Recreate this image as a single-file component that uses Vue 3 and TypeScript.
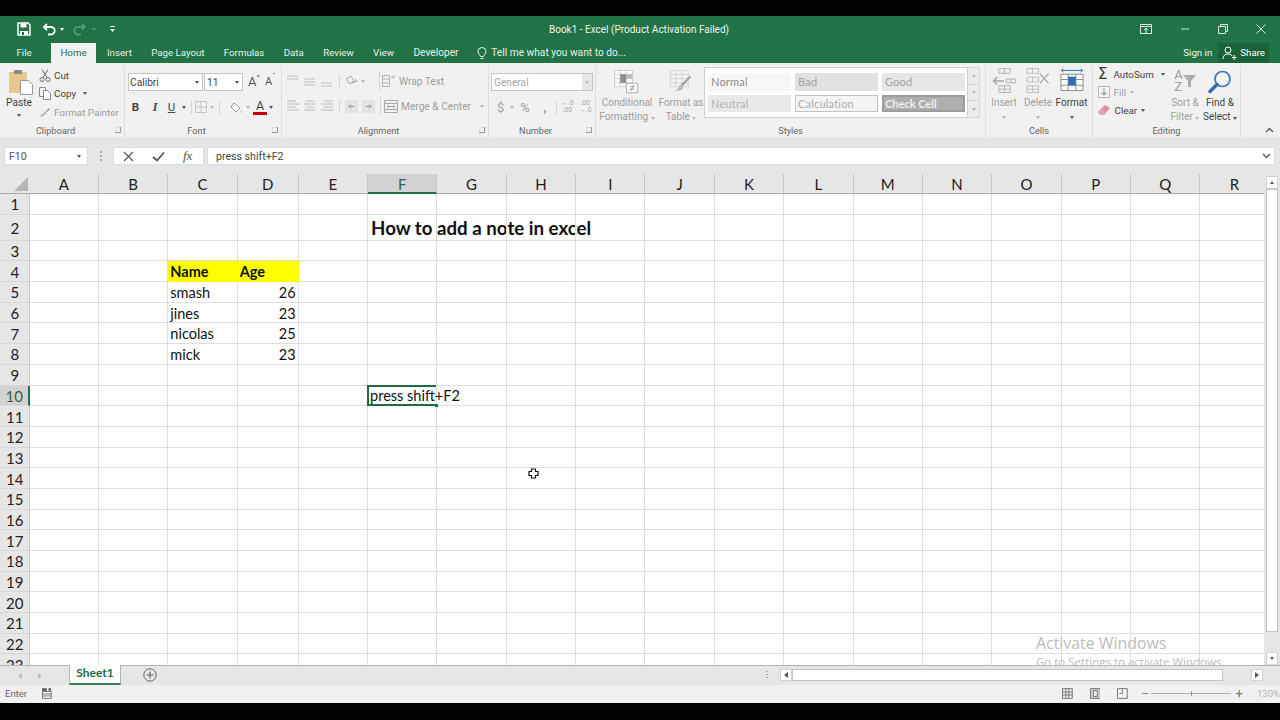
<script setup lang="ts">
interface CellData { text: string; bold?: boolean; right?: boolean; fill?: boolean; big?: boolean }
const colNames = 'ABCDEFGHIJKLMNOPQR'.split('')
const data: Record<string, CellData> = {
  F2: { text: 'How to add a note in excel', bold: true, big: true },
  C4: { text: 'Name', bold: true, fill: true },
  D4: { text: 'Age', bold: true, fill: true },
  C5: { text: 'smash' }, D5: { text: '26', right: true },
  C6: { text: 'jines' }, D6: { text: '23', right: true },
  C7: { text: 'nicolas' }, D7: { text: '25', right: true },
  C8: { text: 'mick' }, D8: { text: '23', right: true },
  F10: { text: 'press shift+F2' }
}
const rows = Array.from({ length: 23 }, (_, i) => i + 1)
const tabs = ['Insert', 'Page Layout', 'Formulas', 'Data', 'Review', 'View', 'Developer']
const alignTop = ['M1 2h11M1 5h11', 'M1 5h11M1 8h11M1 11h11', 'M1 9h11M1 12h11']
const alignSide = ['M1 2h9M1 5h12M1 8h9M1 11h12', 'M3 2h8M1 5h12M3 8h8M1 11h12', 'M4 2h9M1 5h12M4 8h9M1 11h12']
</script>

<template>
  <div class="screen">
    <header class="title-bar">
      <div class="qat">
        <svg class="save" width="14" height="14" viewBox="0 0 14 14"><path d="M1 1h10l2 2v10H1z" fill="none" stroke="#fff" stroke-width="1.5"/><path d="M3.5 1.5h6v4h-6z" fill="#fff"/><path d="M3 9h8v4H3z" fill="#fff"/><path d="M5 10h2v3H5z" fill="#217346"/></svg>
        <svg class="undo" width="14" height="13" viewBox="0 0 14 13"><path d="M2 4h7a3.6 3.6 0 0 1 0 7.500H6M5 1 2 4l3 3" fill="none" stroke="#fff" stroke-width="1.800"/></svg>
        <i class="tri white"></i>
        <svg class="redo" width="14" height="13" viewBox="0 0 14 13"><path d="M12 4H5a3.600 3.600 0 0 0 0 7.500h3M9 1l3 3-3 3" fill="none" stroke="#4f9a73" stroke-width="1.800"/></svg>
        <i class="tri faint"></i>
        <svg class="custom" width="7" height="8" viewBox="0 0 7 8"><path d="M1 1.500h5" stroke="#fff"/><path d="M1 4h5L3.500 7z" fill="#fff"/></svg>
      </div>
      <div class="doc-title">Book1 - Excel (Product Activation Failed)</div>
      <div class="win">
        <svg width="12" height="10" viewBox="0 0 12 10"><path d="M.5.500h11v9H.5zM.5 2.500h11" fill="none" stroke="#dcebe3"/><path d="M6 9V4M4 6l2-2 2 2" fill="none" stroke="#dcebe3"/></svg>
        <svg width="10" height="10" viewBox="0 0 10 10"><path d="M1 5h8" stroke="#dcebe3"/></svg>
        <svg width="10" height="10" viewBox="0 0 10 10"><path d="M.5 2.500h7v7h-7zM2.500 2.500v-2h7v7h-2" fill="none" stroke="#dcebe3"/></svg>
        <svg width="10" height="10" viewBox="0 0 10 10"><path d="M.5.500l9 9M9.500.500l-9 9" stroke="#dcebe3"/></svg>
      </div>
    </header>

    <nav class="tab-bar">
      <span class="tab file">File</span>
      <span class="tab home">Home</span>
      <span v-for="t in tabs" :key="t" class="tab">{{ t }}</span>
      <span class="tell">
        <svg width="10" height="13" viewBox="0 0 10 13"><path d="M3.500 9.500C3 7.500 1 6.800 1 4.500a4 4 0 0 1 8 0C9 6.800 7 7.500 6.500 9.500zM3.500 11.500h3" fill="none" stroke="#fff" stroke-width=".9"/></svg>
        Tell me what you want to do...
      </span>
      <span class="sign">Sign in</span>
      <span class="share">
        <svg width="15" height="14" viewBox="0 0 15 14"><circle cx="6" cy="4" r="3" fill="none" stroke="#fff"/><path d="M1 13c0-3.500 2-5 5-5s3.500.800 4 2M10 11.500h4.500M12.200 9v5" fill="none" stroke="#fff"/></svg>
        Share
      </span>
    </nav>

    <section class="ribbon">
      <div class="group g-clip">
        <div class="body clip-body">
          <div class="paste">
            <svg width="24" height="26" viewBox="0 0 24 26"><path d="M0 3h18v21H0z" fill="#e8c88f"/><path d="M5 1h8v4H5z" fill="#8d8d8d"/><path d="M11.500 11.500h8l4 4v10h-12z" fill="#fff" stroke="#9a9a9a"/></svg>
            <span>Paste</span>
            <i class="tri dark"></i>
          </div>
          <div class="clip-list">
            <div class="clip-item">
              <svg width="12" height="13" viewBox="0 0 12 13"><circle cx="3" cy="10.500" r="2" fill="none" stroke="#55708c"/><circle cx="9" cy="10.500" r="2" fill="none" stroke="#55708c"/><path d="M3.800 8.800 9 .500M8.200 8.800 3 .500" stroke="#666"/></svg>
              <span>Cut</span>
            </div>
            <div class="clip-item">
              <svg width="12" height="13" viewBox="0 0 12 13"><path d="M.5.500h6v9h-6z" fill="#f4f4f4" stroke="#888"/><path d="M4.500 3.500h4l3 3v6h-7z" fill="#fff" stroke="#888"/></svg>
              <span>Copy</span><i class="tri dark copy-tri"></i>
            </div>
            <div class="clip-item off">
              <svg width="12" height="11" viewBox="0 0 12 11"><path d="M1 9l5-5 2 2-5 4z" fill="#bcbcbc"/><path d="M7 4l3-3 1 1-3 3z" fill="#9c9c9c"/></svg>
              <span>Format Painter</span>
            </div>
          </div>
        </div>
        <div class="label launchable">Clipboard<i class="launch"></i></div>
      </div>

      <div class="group g-font">
        <div class="body font-body">
          <div class="row font-row1">
            <div class="combo name">Calibri<i class="tri dark"></i></div>
            <div class="combo size">11<i class="tri dark"></i></div>
            <span class="grow">A<sup>^</sup></span>
            <span class="grow small">A<sup>ˇ</sup></span>
          </div>
          <div class="row font-row2">
            <b class="fmt">B</b>
            <em class="fmt serifish">I</em>
            <u class="fmt">U</u>
            <i class="tri dark"></i>
            <span class="v-sep"></span>
            <svg class="borders" width="12" height="12" viewBox="0 0 12 12"><path d="M.5.500h11v11H.5zM6 .5v11M.5 6h11" fill="none" stroke="#c6c6c6"/></svg>
            <i class="tri pale"></i>
            <span class="v-sep"></span>
            <svg class="bucket" width="14" height="13" viewBox="0 0 14 13"><path d="M5 2l6 5-4 4-5-5z" fill="#fff" stroke="#9a9a9a"/><path d="M12 9c1 1.500 1 3 0 3s-1-1.500 0-3z" fill="#c8c8c8"/></svg>
            <i class="tri pale"></i>
            <span class="font-color">A</span>
            <i class="tri dark"></i>
          </div>
        </div>
        <div class="label launchable">Font<i class="launch"></i></div>
      </div>

      <div class="group g-align">
        <div class="body align-body">
          <div class="row align-row1">
            <svg v-for="d in alignTop" :key="d" width="14" height="14" viewBox="0 0 14 14"><path :d="d" stroke="#bdbdbd" fill="none"/></svg>
            <span class="v-sep"></span>
            <svg width="13" height="13" viewBox="0 0 13 13"><path d="M1 4l5-3 3 5-4 3zM7 8l5-2M10 4l2 2-2 1" fill="none" stroke="#a9a9a9"/></svg>
            <i class="tri pale"></i>
            <span class="v-sep second"></span>
            <svg width="14" height="14" viewBox="0 0 14 14"><path d="M.5 1.500h7v11h-7zM.5 5h7M.5 9h7M9 3h3.500M11 1.500l1.500 1.500L11 4.500" fill="none" stroke="#b2b2b2"/></svg>
            <span class="dim-text">Wrap Text</span>
          </div>
          <div class="row align-row2">
            <svg v-for="d in alignSide" :key="d" width="14" height="14" viewBox="0 0 14 14"><path :d="d" stroke="#bdbdbd" fill="none"/></svg>
            <span class="v-sep"></span>
            <svg width="13" height="13" viewBox="0 0 13 13"><path d="M0 0h13v13H0z" fill="#e3e3e3"/><path d="M9 6.500H4M6 4.500l-2 2 2 2" fill="none" stroke="#9a9a9a"/></svg>
            <svg class="indent2" width="13" height="13" viewBox="0 0 13 13"><path d="M0 0h13v13H0z" fill="#e3e3e3"/><path d="M4 6.500h5M7 4.500l2 2-2 2" fill="none" stroke="#9a9a9a"/></svg>
            <span class="v-sep third"></span>
            <svg class="merge" width="14" height="13" viewBox="0 0 14 13"><path d="M.5.500h13v12H.5zM.5 3.500h13M.5 9.500h13M3 6.500h8M5 5 3 6.500 5 8M9 5l2 1.500L9 8" fill="none" stroke="#a8a8a8"/></svg>
            <span class="dim-text">Merge &amp; Center</span>
            <i class="tri pale merge-tri"></i>
          </div>
        </div>
        <div class="label launchable">Alignment<i class="launch"></i></div>
      </div>

      <div class="group g-number">
        <div class="body number-body">
          <div class="row">
            <div class="combo general">General<span class="combo-btn"><i class="tri pale"></i></span></div>
          </div>
          <div class="row number-row2">
            <span class="sym dollar">$</span>
            <i class="tri pale"></i>
            <span class="sym percent">%</span>
            <span class="sym comma">,</span>
            <span class="v-sep"></span>
            <span class="dec"><span>←.0</span><span>.00</span></span>
            <span class="dec"><span>.00</span><span>→.0</span></span>
          </div>
        </div>
        <div class="label launchable">Number<i class="launch"></i></div>
      </div>

      <div class="group g-styles">
        <div class="body styles-body">
          <div class="big-btn cond">
            <svg width="26" height="24" viewBox="0 0 30 28"><path d="M.5.500h21v19H.5zM.5 5h21M.5 10h21M.5 15h21M7 .5v19M14 .5v19" fill="#fff" stroke="#c6c6c6"/><path d="M7 5h7v10H7z" fill="#8e8e8e"/><path d="M14 5h7v5h-7z" fill="#bdbdbd"/><path d="M14.500 15.500h13v11h-13z" fill="#fff" stroke="#a0a0a0"/><path d="M18 19.500h6M18 22.500h6M23 17.500l-4 7" stroke="#909090" fill="none"/></svg>
            <span>Conditional</span>
            <span>Formatting <i class="tri pale"></i></span>
          </div>
          <div class="big-btn astable">
            <svg width="26" height="24" viewBox="0 0 26 28"><path d="M.5.500h21v19H.5zM.5 5h21M.5 10h21M.5 15h21M7 .5v19M14 .5v19" fill="#f3f3f3" stroke="#cfcfcf"/><path d="M25 8 15 19l-2-2L23 7z" fill="#9d9d9d"/><path d="M13 17c-3 1-2 5-7 7 6 1 10-1 9-5z" fill="#b9b9b9"/></svg>
            <span>Format as</span>
            <span>Table <i class="tri pale"></i></span>
          </div>
          <div class="gallery">
            <div class="swatches">
              <span class="sw normal">Normal</span>
              <span class="sw bad">Bad</span>
              <span class="sw good">Good</span>
              <span class="sw neutral">Neutral</span>
              <span class="sw calc">Calculation</span>
              <span class="sw check">Check Cell</span>
            </div>
            <div class="gal-scroll">
              <span><i class="tri up"></i></span>
              <span><i class="tri pale"></i></span>
              <span><i class="tri pale"></i></span>
            </div>
          </div>
        </div>
        <div class="label">Styles</div>
      </div>

      <div class="group g-cells">
        <div class="body cells-body">
          <div class="big-btn cell-btn off">
            <svg width="25" height="25" viewBox="0 0 25 26"><path d="M6.500.500h12v5h-12zM6.500 18.500h12v7h-12zM12.500 18.500v7M6.500 22h12M12.500.500v5M14 11.500h10v4H14zM19 11.500v4" fill="none" stroke="#b5b5b5"/><path d="M12 13.500H1M5 9.500l-4 4 4 4" fill="none" stroke="#a5a5a5" stroke-width="1.500"/></svg>
            <span>Insert</span><i class="tri pale"></i>
          </div>
          <div class="big-btn cell-btn off">
            <svg width="26" height="25" viewBox="0 0 26 26"><path d="M1.500.500h12v5h-12zM1.500 18.500h12v7h-12zM7.500 18.500v7M1.500 22h12M7.500.500v5M1.500 9.500h12v5h-12zM7.500 9.500v5" fill="none" stroke="#c0c0c0"/><path d="M15 6l9 10M24 6l-9 10" stroke="#adadad" stroke-width="1.500"/></svg>
            <span>Delete</span><i class="tri pale"></i>
          </div>
          <div class="big-btn cell-btn format-btn">
            <svg width="24" height="25" viewBox="0 0 24 26"><path d="M.5 6.500h23v17H.5zM8 6.500v17M16 6.500v17M.5 12h23M.5 18h23" fill="#fff" stroke="#8a8a8a"/><path d="M8 9h8v9H8z" fill="#2f70b5"/><path d="M1 2.500h22M3 .5 1 2.500l2 2M21 .5l2 2-2 2" fill="none" stroke="#2f70b5"/></svg>
            <span class="strong">Format</span><i class="tri dark"></i>
          </div>
        </div>
        <div class="label">Cells</div>
      </div>

      <div class="group g-edit">
        <div class="body edit-body">
          <div class="edit-list">
            <div class="edit-item"><span class="sigma">Σ</span><span class="strong">AutoSum</span><i class="tri dark auto-tri"></i></div>
            <div class="edit-item off">
              <svg width="12" height="12" viewBox="0 0 12 12"><path d="M.5.500h11v11H.5z" fill="#f4f4f4" stroke="#b8b8b8"/><path d="M6 2v7M3.500 6.500 6 9l2.500-2.500" fill="none" stroke="#a0a0a0" stroke-width="1.200"/></svg>
              <span>Fill</span><i class="tri pale"></i>
            </div>
            <div class="edit-item">
              <svg width="13" height="12" viewBox="0 0 13 12"><path d="M0 8l7-7 5 3-6 7H3z" fill="#e58b9f"/><path d="M0 8l3-3 5 3-2 3H3z" fill="#d9a5b0"/></svg>
              <span class="strong">Clear</span><i class="tri dark"></i>
            </div>
          </div>
          <div class="big-btn sort off">
            <div class="sort-ico"><span class="az">A<br>Z</span>
              <svg width="13" height="12" viewBox="0 0 13 12"><path d="M0 0h13L8 6v6H5V6z" fill="#adadad"/></svg>
            </div>
            <span>Sort &amp;</span>
            <span>Filter <i class="tri pale"></i></span>
          </div>
          <div class="big-btn find">
            <svg width="24" height="24" viewBox="0 0 24 24"><circle cx="14.500" cy="9" r="7.500" fill="none" stroke="#3a78ba" stroke-width="1.700"/><path d="M9 14.500 2 21.500" stroke="#2f6ca8" stroke-width="3.400" stroke-linecap="round"/></svg>
            <span class="strong">Find &amp;</span>
            <span class="strong">Select <i class="tri dark"></i></span>
          </div>
        </div>
        <div class="label">Editing</div>
      </div>

      <div class="collapse">
        <svg width="9" height="6" viewBox="0 0 9 6"><path d="M1 5l3.500-3.500L8 5" fill="none" stroke="#555" stroke-width="1.300"/></svg>
      </div>
    </section>

    <section class="formula-bar">
      <div class="name-box">F10<i class="tri dark"></i></div>
      <div class="grip"></div>
      <div class="fx-box">
        <svg width="11" height="11" viewBox="0 0 11 11"><path d="M1 1l9 9M10 1l-9 9" stroke="#555" stroke-width="1.200"/></svg>
        <svg width="13" height="11" viewBox="0 0 13 11"><path d="M1 6l4 3.500L12 1.500" fill="none" stroke="#555" stroke-width="1.800"/></svg>
        <span class="fx">fx</span>
      </div>
      <div class="input">press shift+F2
        <svg width="9" height="6" viewBox="0 0 9 6"><path d="M1 1l3.500 3.500L8 1" fill="none" stroke="#555" stroke-width="1.300"/></svg>
      </div>
    </section>

    <section class="workspace">
      <div class="sheet">
        <div class="corner"><i></i></div>
        <div v-for="c in colNames" :key="c" class="col-head" :class="{ active: c === 'F' }">{{ c }}</div>
        <template v-for="r in rows" :key="r">
          <div class="row-head" :class="{ active: r === 10 }">{{ r }}</div>
          <div
            v-for="c in colNames"
            :key="c + r"
            class="cell"
            :class="{
              bold: data[c + r]?.bold,
              big: data[c + r]?.big,
              right: data[c + r]?.right,
              fill: data[c + r]?.fill,
              selected: c + r === 'F10'
            }"
          >{{ data[c + r]?.text }}</div>
        </template>
      </div>
      <div class="v-scroll">
        <span class="sb-btn"><i class="tri up dark"></i></span>
        <span class="sb-thumb"></span>
        <span class="sb-btn"><i class="tri dark"></i></span>
      </div>
      <svg class="cursor" width="11" height="11" viewBox="0 0 11 11"><path d="M3.500 1h4v2.500H10v4H7.500V10h-4V7.500H1v-4h2.500z" fill="#fff" stroke="#111" stroke-width="1.200"/></svg>
      <div class="watermark">
        <div class="wm1">Activate Windows</div>
        <div class="wm2">Go to Settings to activate Windows.</div>
      </div>
    </section>

    <section class="sheet-bar">
      <div class="nav"><i class="arrow left"></i><i class="arrow right"></i></div>
      <div class="sheet-tab">Sheet1</div>
      <svg class="add" width="14" height="14" viewBox="0 0 14 14"><circle cx="7" cy="7" r="6.200" fill="none" stroke="#666"/><path d="M7 3.500v7M3.500 7h7" stroke="#666" stroke-width="1.200"/></svg>
      <div class="h-dots"></div>
      <div class="h-scroll">
        <span class="h-btn"><i class="arrow left dark"></i></span>
        <span class="h-thumb"></span>
        <span class="h-btn end"><i class="arrow right dark"></i></span>
      </div>
    </section>

    <footer class="status">
      <span class="enter">Enter</span>
      <svg class="macro" width="10" height="11" viewBox="0 0 10 11"><path d="M.5 3.500h9v7h-9zM.5 6h9M.5 8h9" fill="#fff" stroke="#777"/><path d="M0 0h5v3H0z" fill="#666"/><circle cx="8" cy="1.500" r="1.500" fill="#666"/></svg>
      <svg class="view" width="11" height="11" viewBox="0 0 11 11"><path d="M.5.500h10v10H.5zM4 .5v10M7 .5v10M.5 4h10M.5 7h10" fill="none" stroke="#777"/></svg>
      <svg class="view" width="11" height="11" viewBox="0 0 11 11"><path d="M.5.500h10v10H.5z" fill="#cfcfcf" stroke="#777"/><path d="M3.500 2.500h4v6h-4z" fill="#eee" stroke="#777"/></svg>
      <svg class="view" width="11" height="11" viewBox="0 0 11 11"><path d="M.5.500h10v10H.5zM5.500.5v5h-3" fill="none" stroke="#777"/></svg>
      <span class="minus"></span>
      <span class="slider"><i></i></span>
      <span class="plus">+</span>
      <span class="zoom">130%</span>
    </footer>
  </div>
</template>

<style>
html, body { margin: 0; background: #000; }
</style>

<style scoped>
.screen {
  width: 1280px; height: 720px; overflow: hidden; background: #000;
  padding: 16px 0 17px; box-sizing: border-box;
  display: flex; flex-direction: column;
  font-family: Roboto, "Open Sans", sans-serif; color: #444;
}
i { display: inline-block; font-style: normal; }
.tri { width: 0; height: 0; border: 2.5px solid transparent; border-bottom-width: 0; border-top: 3px solid #666; }
.tri.white { border-top-color: #fff; }
.tri.faint { border-top-color: #4f9a73; }
.tri.dark { border-top-color: #555; }
.tri.pale { border-top-color: #b9b9b9; }
.tri.up { border-top-width: 0; border-bottom: 3px solid #b9b9b9; }
.tri.up.dark { border-bottom-color: #555; }

.title-bar { height: 26px; background: #217346; display: flex; align-items: center; position: relative; color: #eaf3ee; flex: none; }
.qat { display: flex; align-items: center; padding-left: 17px; }
.undo { margin-left: 11px; }
.qat .tri.white { margin-left: 4px; }
.redo { margin-left: 9px; }
.qat .tri.faint { margin-left: 5px; }
.custom { margin-left: 13px; }
.doc-title { position: absolute; left: 0; right: 2px; top: 6px; text-align: center; font-size: 10px; line-height: 15px; }
.win { margin-left: auto; display: flex; align-items: center; gap: 28px; padding-right: 14px; }

.tab-bar { height: 21px; background: #217346; display: flex; align-items: flex-end; flex: none; color: #e6f0ea; font-size: 9.700px; line-height: 20px; position: relative; }
.tab { padding: 0 9.700px; white-space: nowrap; }
.tab:nth-last-child(4) { font-size: 10.200px; }
.tab.file { padding: 0 19px 0 16.500px; width: 15.500px; }
.tab.home { background: #f1f1f1; color: #217346; height: 20px; padding: 0 9px; margin-right: 1.300px; width: 27px; text-align: center; box-sizing: content-box; }
.tell { display: flex; align-items: center; gap: 4px; margin-left: 9px; white-space: nowrap; font-size: 10.200px; height: 20px; }
.sign { margin-left: auto; color: #f1f6f3; }
.share { display: flex; align-items: center; gap: 3px; background: #1c6239; height: 20px; margin: 0 11px 0 6px; padding: 0 4px; color: #fff; }

.ribbon { height: 74px; background: #f1f1f1; display: flex; flex: none; box-sizing: border-box; }
.group { display: flex; flex-direction: column; height: 71px; margin-top: 3px; border-right: 1px solid #dedede; box-sizing: border-box; flex: none; }
.body { flex: 1; min-height: 0; }
.label { height: 13px; line-height: 14px; font-size: 9.200px; text-align: center; color: #666; position: relative; flex: none; }
.label.launchable { padding-right: 13px; }
.launch { position: absolute; right: 3px; top: 3px; width: 5px; height: 5px; border-right: 1px solid #999; border-bottom: 1px solid #999; box-shadow: inset 1px 1px 0 #ddd; }
.row { display: flex; align-items: center; }
.off { color: #9d9d9d; }
.strong { color: #444; }

.g-clip { width: 125px; }
.clip-body { display: flex; }
.paste { width: 38px; display: flex; flex-direction: column; align-items: center; padding: 3px 0 0; font-size: 10.200px; color: #444; box-sizing: border-box; }
.paste svg { margin-bottom: 1px; flex: none; transform: translateX(2px); }
.paste span { line-height: 14px; height: 14px; margin-top: 0; }
.paste .tri { margin-top: 4px; }
.clip-item { height: 18.600px; display: flex; align-items: center; font-size: 9.800px; white-space: nowrap; }
.clip-item svg { margin-right: 3px; margin-left: 1px; }
.copy-tri { margin-left: 7px; }

.g-font { width: 157px; }
.font-body { padding: 7px 0 0 3px; }
.font-row1 { height: 18px; }
.combo { background: #fff; border: 1px solid #c6c6c6; height: 18px; box-sizing: border-box; display: flex; align-items: center; font-size: 10.200px; padding-left: 1px; justify-content: space-between; padding-right: 3px; }
.combo.name { width: 75px; }
.combo.size { width: 39px; margin-left: 1px; padding-left: 2px; }
.grow { font-size: 13px; margin-left: 5px; width: 12px; color: #555; line-height: 14px; white-space: nowrap; }
.grow sup { font-size: 8px; line-height: 0; position: relative; top: -1px; }
.grow.small { font-size: 11px; margin-left: 5px; }
.font-row2 { height: 18px; margin-top: 7px; padding-left: 3px; }
.fmt { width: 18px; text-align: center; font-size: 11.500px; color: #444; font-style: normal; }
.font-row2 .fmt:first-child { width: 9px; margin-right: 0; }
.font-row2 .fmt:first-child + .fmt { margin-left: 7px; width: 16px; font-style: italic; font-family: "Liberation Serif", serif; font-size: 12px; font-weight: bold; }
.font-row2 u { width: 14px !important; margin-left: 1.500px; }
.font-row2 .tri { margin-left: 3px; }
.v-sep { width: 1px; height: 13px; background: #d5d5d5; margin: 0 5px; flex: none; }
.borders { margin-right: 0; margin-left: -2px; }
.font-row2 .borders + .tri { margin: 0 0 0 3px; }
.bucket { margin-left: 4.500px; }
.font-row2 .tri.dark:last-child { margin-left: 2px; }
.font-color { font-size: 12.500px; line-height: 11px; height: 12px; width: 14px; text-align: center; border-bottom: 3px solid #c00000; margin-left: 3px; color: #444; }

.g-align { width: 207px; }
.align-body { padding: 5px 0 0 4px; }
.align-row1 { height: 20px; gap: 3px; }
.align-row1 .v-sep { margin: 0 2px 0 2px; }
.align-row1 .tri { margin-left: 0; }
.align-row1 .v-sep.second { margin: 0 -1px 0 11px; height: 18px; }
.dim-text { font-size: 10.200px; color: #a0a0a0; white-space: nowrap; }
.align-row2 { height: 20px; margin-top: 5px; gap: 3px; }
.align-row2 .v-sep { margin: 0 2px 0 2px; }
.indent2 { margin-left: 1px; }
.align-row2 .v-sep.third { margin: 0 0 0 2px; height: 18px; }
.merge-tri { margin-left: 6px; }

.g-number { width: 107px; }
.number-body { padding: 7px 0 0 2px; }
.combo.general { width: 102px; color: #a5a5a5; padding: 0 0 0 2px; border-color: #c6c6c6; }
.combo-btn { width: 10px; height: 16px; background: #e6e6e6; display: flex; align-items: center; justify-content: center; }
.number-row2 { height: 18px; margin-top: 7px; color: #a0a0a0; padding-left: 6px; }
.sym { font-size: 13px; }
.dollar + .tri { margin: 0 0 0 6px; }
.percent { margin-left: 6px; width: 14px; }
.comma { margin-left: 9px; font-weight: bold; width: 6px; }
.number-row2 .v-sep { margin: 0 1px 0 7px; }
.dec { display: flex; flex-direction: column; font-size: 7px; line-height: 7px; width: 18px; align-items: center; color: #aaa; white-space: nowrap; }

.g-styles { width: 390px; }
.styles-body { display: flex; }
.big-btn { display: flex; flex-direction: column; align-items: center; font-size: 10px; line-height: 14px; color: #9d9d9d; white-space: nowrap; flex: none; }
.big-btn.off span { color: #a0a0a0; }
.big-btn > svg { flex: none; margin-top: 4px; margin-bottom: 2px; }
.big-btn > span { height: 14px; flex: none; }
.cond { width: 62px; }
.astable { width: 46px; }
.gallery { display: flex; height: 51px; margin-top: 1px; }
.swatches { width: 264px; height: 51px; box-sizing: border-box; background: #fff; border: 1px solid #cfcfcf; padding: 5px 3px 0; display: grid; grid-template-columns: repeat(3, 83px); grid-auto-rows: 17.500px; column-gap: 4px; row-gap: 4px; }
.sw { font-family: Lato, sans-serif; font-size: 11px; letter-spacing: .2px; line-height: 17px; padding-left: 3px; color: #999; box-sizing: border-box; font-weight: 400; }
.sw.normal { background: #f8f7f7; color: #8a8a8a; }
.sw.bad { background: #e2e1e1; color: #a2a2a2; }
.sw.good { background: #e6e6e6; color: #a2a2a2; }
.sw.neutral { background: #e8e8e8; color: #b2b2b2; }
.sw.calc { background: #f4f4f4; border: 1px solid #c2c2c2; color: #ababab; line-height: 15px; padding-left: 2px; }
.sw.check { background: #aeaeae; border: 2px solid #9c9c9c; color: #eee; font-weight: 700; letter-spacing: 0; line-height: 13px; padding-left: 1px; }
.gal-scroll { width: 12px; display: flex; flex-direction: column; }
.gal-scroll span { flex: 1; border: 1px solid #d8d8d8; border-left: 0; display: flex; align-items: center; justify-content: center; background: #ececec; }
.gal-scroll span + span { border-top: 0; }

.g-cells { width: 107px; }
.cells-body { display: flex; }
.cell-btn { width: 34px; }
.cell-btn:first-child { margin-left: 1px; }
.cell-btn.format-btn { width: 33px; }
.cell-btn > svg { margin-top: 2px; margin-bottom: 3px; }
.cell-btn .tri { margin-top: 6px; }
.g-edit { width: 148px; }
.edit-body { display: flex; }
.edit-list { width: 78px; padding: 0 0 0 5px; box-sizing: border-box; margin-top: -1px; }
.edit-item { height: 18px; display: flex; align-items: center; font-size: 9.800px; gap: 3.500px; white-space: nowrap; }
.sigma { font-family: "DejaVu Sans", sans-serif; font-size: 15px; width: 11px; color: #333; line-height: 14px; margin-right: 1px; }
.auto-tri { margin-left: 4px; }
.sort { width: 36px; margin-left: -4px; }
.sort-ico { display: flex; align-items: flex-start; height: 25px; margin: 3px 0 2px; color: #b2b2b2; flex: none; }
.sort-ico svg { flex: none; margin: 6px 0 0 0; }
.az { font-size: 13px; line-height: 12px; height: auto !important; }
.find { width: 38px; margin-left: -2px; }
.find > svg { margin: 4px 0 2px; }
.collapse { flex: 1; display: flex; justify-content: center; align-items: flex-end; padding: 0 0 4px 18px; }

.formula-bar { height: 37px; flex: none; background: #e6e6e6; box-sizing: border-box; padding: 10px 5px 9px 4px; display: flex; align-items: stretch; font-size: 10.600px; color: #555; }
.name-box { width: 84px; background: #fff; border: 1px solid #dcdcdc; box-sizing: border-box; display: flex; justify-content: space-between; align-items: center; padding: 0 6px 0 4px; }
.grip { width: 2px; margin: 4px 0 4px 12px; background: repeating-linear-gradient(#aaa 0 2px, transparent 2px 4px); }
.fx-box { width: 91px; margin-left: 11px; background: #fff; border: 1px solid #dcdcdc; box-sizing: border-box; display: flex; align-items: center; justify-content: flex-start; padding-left: 9px; gap: 18px; }
.fx { font-family: "Liberation Serif", serif; font-style: italic; font-size: 13px; }
.input { flex: 1; margin-left: 3px; background: #fff; border: 1px solid #dcdcdc; display: flex; justify-content: space-between; align-items: center; padding: 0 3px 0 8px; color: #444; }

.workspace { height: 491px; flex: none; display: flex; position: relative; background: #e6e6e6; }
.sheet { width: 1264px; height: 491px; overflow: hidden; display: grid; grid-template-columns: 29.600px repeat(3, 69.360px) 61px repeat(14, 69.360px); grid-template-rows: 20px 20.7px 26px repeat(21, 20.7px); font-family: Lato, sans-serif; color: #111; background: #fff; }
.corner { background: #e6e6e6; position: relative; border-bottom: 1px solid #aaa; box-sizing: border-box; }
.corner i { position: absolute; right: 2px; bottom: 2px; border-left: 14px solid transparent; border-bottom: 14px solid #b6b6b6; width: 0; height: 0; }
.col-head { background: #e6e6e6; border-right: 1px solid #c6c6c6; border-bottom: 1px solid #aaa; box-sizing: border-box; font-size: 15px; text-align: center; line-height: 20px; color: #222; }
.col-head.active { background: #d2d2d2; color: #35614b; border-bottom: 2px solid #217346; }
.row-head { background: #e6e6e6; border-bottom: 1px solid #d8d8d8; border-right: 1px solid #c6c6c6; box-sizing: border-box; font-size: 15px; display: flex; align-items: center; justify-content: center; padding: 1px 0 0 1px; color: #222; }
.row-head.active { background: #d2d2d2; color: #35614b; border-right: 2px solid #217346; }
.cell { border-right: 1px solid #dedede; border-bottom: 1px solid #dedede; box-sizing: border-box; font-size: 14.500px; white-space: nowrap; display: flex; align-items: center; padding: 1px 2px 0 2px; position: relative; min-width: 0; }
.bold { font-weight: 700; }
.big { font-size: 18.700px; padding: 2px 0 0 3px; }
.right { justify-content: flex-end; }
.fill { background: #ffff00; border-color: #ffff00; }
.selected::after { content: ""; position: absolute; left: -1px; top: -1px; right: 0; bottom: -1px; border: 2px solid #1d6b42; border-right: 0; }
.selected::before { content: ""; position: absolute; right: -2px; bottom: -2px; width: 3px; height: 3px; background: #1d6b42; z-index: 1; }

.v-scroll { width: 16px; padding-top: 2px; display: flex; flex-direction: column; align-items: center; box-sizing: border-box; }
.sb-btn { width: 10px; height: 11px; background: #fff; border: 1px solid #d2d2d2; display: flex; align-items: center; justify-content: center; flex: none; margin-left: -1px; }
.sb-thumb { width: 10px; height: 441px; background: #fff; border: 1px solid #c6c6c6; margin-bottom: 20px; margin-left: -1px; flex: none; }
.cursor { position: absolute; left: 528px; top: 294px; }
.watermark { position: absolute; z-index: 2; left: 1036px; top: 459px; color: #bcbcbc; font-family: "Open Sans", sans-serif; white-space: nowrap; pointer-events: none; }
.wm1 { font-size: 15.900px; line-height: 20px; }
.wm2 { font-size: 11.500px; line-height: 18px; height: 14px; overflow: hidden; }

.sheet-bar { height: 20px; flex: none; background: #e6e6e6; border-top: 1px solid #b5b5b5; box-sizing: border-box; display: flex; position: relative; }
.nav { width: 69px; padding-left: 18px; box-sizing: border-box; display: flex; align-items: center; gap: 16px; }
.arrow { width: 0; height: 0; border: 3px solid transparent; }
.arrow.left { border-left-width: 0; border-right: 4px solid #bdbdbd; }
.arrow.right { border-right-width: 0; border-left: 4px solid #bdbdbd; }
.arrow.left.dark { border-right-color: #555; }
.arrow.right.dark { border-left-color: #555; }
.sheet-tab { height: 18px; margin-top: -1px; background: #fff; border: 1px solid #b5b5b5; border-top: 0; border-bottom: 2px solid #3c7d5a; box-sizing: content-box; width: 50px; font-family: Lato, sans-serif; font-weight: 700; font-size: 12px; line-height: 16px; color: #1e6a42; text-align: center; }
.add { margin: 2px 0 0 22px; }
.h-dots { width: 2px; height: 9px; margin: 5px 0 0 609px; background: repeating-linear-gradient(#aaa 0 1px, transparent 1px 3px); }
.h-scroll { margin-left: 12px; margin-top: 3px; width: 483px; height: 12px; display: flex; align-items: stretch; }
.h-btn { width: 10px; background: #fff; border: 1px solid #d2d2d2; display: flex; align-items: center; justify-content: center; flex: none; }
.h-thumb { width: 431px; background: #fff; border: 1px solid #c6c6c6; box-sizing: border-box; }
.h-btn.end { margin-left: 28px; }

.status { height: 18px; flex: none; background: #f1f1f1; display: flex; align-items: center; font-size: 9.500px; color: #666; position: relative; padding-bottom: 1px; box-sizing: border-box; }
.enter { margin-left: 5px; width: 38px; }
.view { margin-left: 17px; }
.macro + .view { margin-left: 1010px; }
.minus { width: 6px; height: 1.500px; background: #888; margin-left: 14px; }
.slider { width: 82px; height: 1px; background: #b0b0b0; margin-left: 3px; position: relative; }
.slider i { position: absolute; left: 40px; top: -2px; width: 1px; height: 5px; background: #999; }
.plus { margin-left: 2px; font-size: 13px; color: #777; width: 12px; text-align: center; line-height: 14px; }
.zoom { margin-left: 12px; color: #b4b4b4; }
</style>
